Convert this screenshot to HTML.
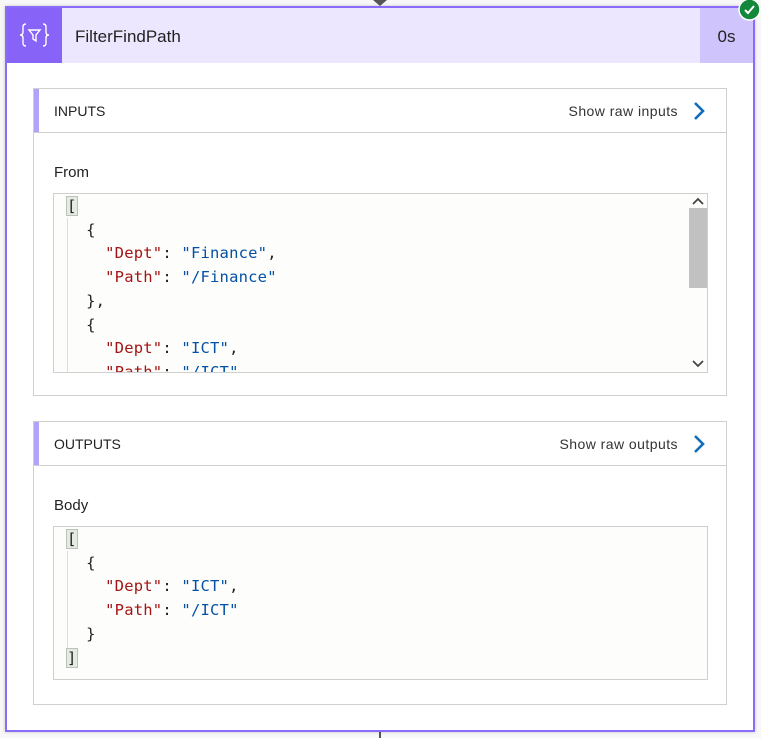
<!DOCTYPE html>
<html><head><meta charset="utf-8"><style>
*{box-sizing:border-box;margin:0;padding:0}
body{width:761px;height:738px;background:#f7f7f7;font-family:"Segoe UI","Liberation Sans",sans-serif;position:relative;overflow:hidden}
.card{position:absolute;left:5px;top:6px;width:750px;height:726px;border:2px solid #8a6cf8;background:#fff;box-shadow:0 0 3px rgba(0,0,0,.2)}
.hdr{position:absolute;left:0;top:0;width:746px;height:55px;background:#ece7ff}
.ico{position:absolute;left:0;top:0;width:55px;height:55px;background:#8764f7}
.title{position:absolute;left:68px;top:0;line-height:57px;font-size:17px;color:#222}
.dur{position:absolute;right:0;top:0;width:53px;height:55px;background:#cfc5fc;font-size:17px;line-height:57px;text-align:center;color:#222}
.sec{position:absolute;left:26px;width:694px;border:1px solid #cfcfcf;background:#fff}
.sh{height:44px;border-bottom:1px solid #cfcfcf;position:relative}
.sh:before{content:"";position:absolute;left:0;top:0;width:5px;height:43px;background:#b3a3f8}
.sh .l{position:absolute;left:20px;top:0;line-height:44px;font-size:14px;color:#222}
.sh .r{position:absolute;right:48px;top:0;line-height:44px;font-size:14px;color:#333;letter-spacing:0.45px}
.sh svg{position:absolute;right:21px;top:12px}
.lab{position:absolute;left:20px;font-size:15px;color:#222}
.code{position:absolute;left:19px;width:655px;border:1px solid #cfcfcf;background:#fdfdfb;overflow:hidden;font-family:"DejaVu Sans Mono","Liberation Mono",monospace;color:#222}
.code pre{font-family:inherit;font-size:15.5px;line-height:23.7px;position:absolute;left:13px;top:1px;letter-spacing:0.2px}
.k{color:#a31515}.v{color:#0451a5}
.br{background:#e5ebe3;outline:1px solid #b9c3b6}
.guide{position:absolute;left:13px;top:24px;width:1px;height:200px;background:#ddd}
.sb{position:absolute;right:0;top:0;width:18px;height:100%}
</style></head><body>
<svg style="position:absolute;left:373px;top:0" width="14" height="6"><path d="M0 0 L7 6 L14 0Z" fill="#555"/></svg>
<div style="position:absolute;left:379px;top:731px;width:2px;height:7px;background:#555"></div>
<div class="card">
 <div class="hdr">
  <div class="ico"><svg width="55" height="55" viewBox="0 0 55 55" fill="none" stroke="#fff" stroke-width="1.4">
   <path d="M19 16 Q16 16 16 19 L16 24 Q16 27 13 27 Q16 27 16 30 L16 35 Q16 38 19 38"/>
   <path d="M36 16 Q39 16 39 19 L39 24 Q39 27 42 27 Q39 27 39 30 L39 35 Q39 38 36 38"/>
   <path d="M22 22 L33 22 L29 27 L29 33 L26 31 L26 27 Z"/>
  </svg></div>
  <div class="title">FilterFindPath</div>
  <div class="dur">0s</div>
 </div>
 <div class="sec" style="top:80px;height:308px">
  <div class="sh"><span class="l">INPUTS</span><span class="r">Show raw inputs</span>
   <svg width="12" height="20"><path d="M2 2 L10 10 L2 18" stroke="#0f6cbd" stroke-width="2.6" fill="none"/></svg></div>
  <div class="lab" style="top:75px">From</div>
  <div class="code" style="top:104px;height:180px">
   <div class="guide"></div>
   <pre><span class="br">[</span>
  {
    <span class="k">"Dept"</span>: <span class="v">"Finance"</span>,
    <span class="k">"Path"</span>: <span class="v">"/Finance"</span>
  },
  {
    <span class="k">"Dept"</span>: <span class="v">"ICT"</span>,
    <span class="k">"Path"</span>: <span class="v">"/ICT"</span></pre>
   <div class="sb">
    <svg style="position:absolute;left:3px;top:3px" width="12" height="8"><path d="M1 7 L6 2 L11 7" stroke="#444" stroke-width="1.8" fill="none"/></svg>
    <div style="position:absolute;left:0;top:14px;width:18px;height:80px;background:#c1c1c1"></div>
    <svg style="position:absolute;left:3px;top:166px" width="12" height="8"><path d="M1 1 L6 6 L11 1" stroke="#444" stroke-width="1.8" fill="none"/></svg>
   </div>
  </div>
 </div>
 <div class="sec" style="top:413px;height:284px">
  <div class="sh"><span class="l">OUTPUTS</span><span class="r">Show raw outputs</span>
   <svg width="12" height="20"><path d="M2 2 L10 10 L2 18" stroke="#0f6cbd" stroke-width="2.6" fill="none"/></svg></div>
  <div class="lab" style="top:75px">Body</div>
  <div class="code" style="top:104px;height:154px">
   <div class="guide" style="height:100px"></div>
   <pre><span class="br">[</span>
  {
    <span class="k">"Dept"</span>: <span class="v">"ICT"</span>,
    <span class="k">"Path"</span>: <span class="v">"/ICT"</span>
  }
<span class="br">]</span></pre>
  </div>
 </div>
</div>
<svg style="position:absolute;left:738px;top:-2px" width="23" height="23"><circle cx="11.5" cy="11.5" r="10.5" fill="#13883b" stroke="#fff" stroke-width="1.5"/><path d="M7 12 L10 15 L16 8" stroke="#fff" stroke-width="2" fill="none"/></svg>
</body></html>
